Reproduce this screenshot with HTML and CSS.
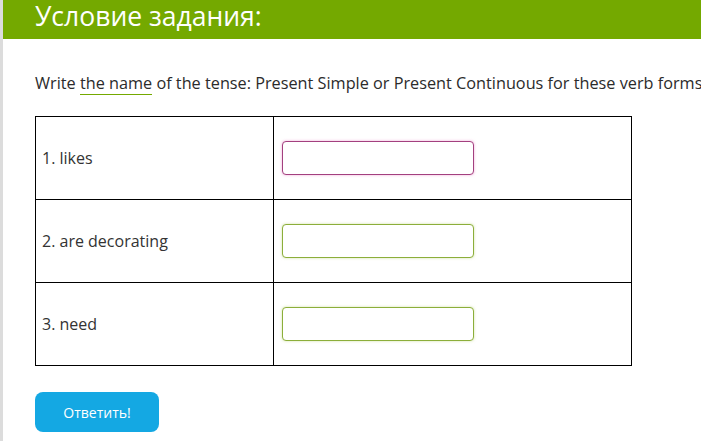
FILE: index.html
```html
<!DOCTYPE html>
<html>
<head>
<meta charset="utf-8">
<link rel="stylesheet" href="styles.css">
</head>
<body>
<div class="page">
  <div class="header"><h1 class="title">Условие задания:</h1></div>
  <div class="content">
    <p class="task">Write <span class="hint">the name</span> of the tense: Present Simple or Present Continuous for these verb forms:</p>
    <table class="grid">
      <tr><td class="word">1. likes</td><td class="field"><input class="answer wrong" type="text"></td></tr>
      <tr><td class="word">2. are decorating</td><td class="field"><input class="answer right" type="text"></td></tr>
      <tr><td class="word">3. need</td><td class="field"><input class="answer right" type="text"></td></tr>
    </table>
    <button class="submit">Ответить!</button>
  </div>
</div>
</body>
</html>
```
FILE: styles.css
```css
html, body {
  margin: 0;
  padding: 0;
  background: #fff;
  overflow: hidden;
}
body {
  font-family: "Open Sans", "Liberation Sans", sans-serif;
  color: #333;
}
.page {
  width: 701px;
  height: 441px;
  border-left: 3px solid #dcdcdc;
  box-sizing: border-box;
  overflow: hidden;
}
.header {
  background: #74a900;
  height: 39px;
  margin-left: -1px;
  display: flex;
  align-items: flex-start;
}
.title {
  margin: 0;
  padding-left: 33px;
  padding-top: 0;
  font-weight: 400;
  font-size: 26.5px;
  line-height: 32px;
  color: #fff;
}
.content {
  padding-left: 32px;
}
.task {
  margin: 33px 0 0 0;
  font-size: 16.25px;
  line-height: 22px;
  white-space: nowrap;
  color: #2b2b2b;
}
.hint {
  border-bottom: 1px solid #74a900;
}
.grid {
  margin-top: 22px;
  border-collapse: collapse;
  width: 597px;
}
.grid td {
  border: 1px solid #000;
  height: 82px;
  padding: 0;
  vertical-align: middle;
}
.word {
  width: 231px;
  padding-left: 6px !important;
  font-size: 16px;
  color: #333;
}
.field {
  padding-left: 8px !important;
}
.answer {
  display: block;
  width: 192px;
  height: 34px;
  box-sizing: border-box;
  border-radius: 4px;
  background: #fff;
  outline: none;
  margin: 0;
}
.wrong {
  border: 1px solid #a3407f;
  box-shadow: 0 0 3px rgba(230, 120, 190, 0.6);
}
.right {
  border: 1px solid #8cae3a;
  box-shadow: 0 0 3px rgba(180, 210, 110, 0.6);
}
.submit {
  margin-top: 26px;
  width: 124px;
  height: 40px;
  border: none;
  border-radius: 8px;
  background: #14a8e3;
  color: #fff;
  font-family: "Open Sans", "Liberation Sans", sans-serif;
  font-size: 14px;
  padding: 0;
}
```
